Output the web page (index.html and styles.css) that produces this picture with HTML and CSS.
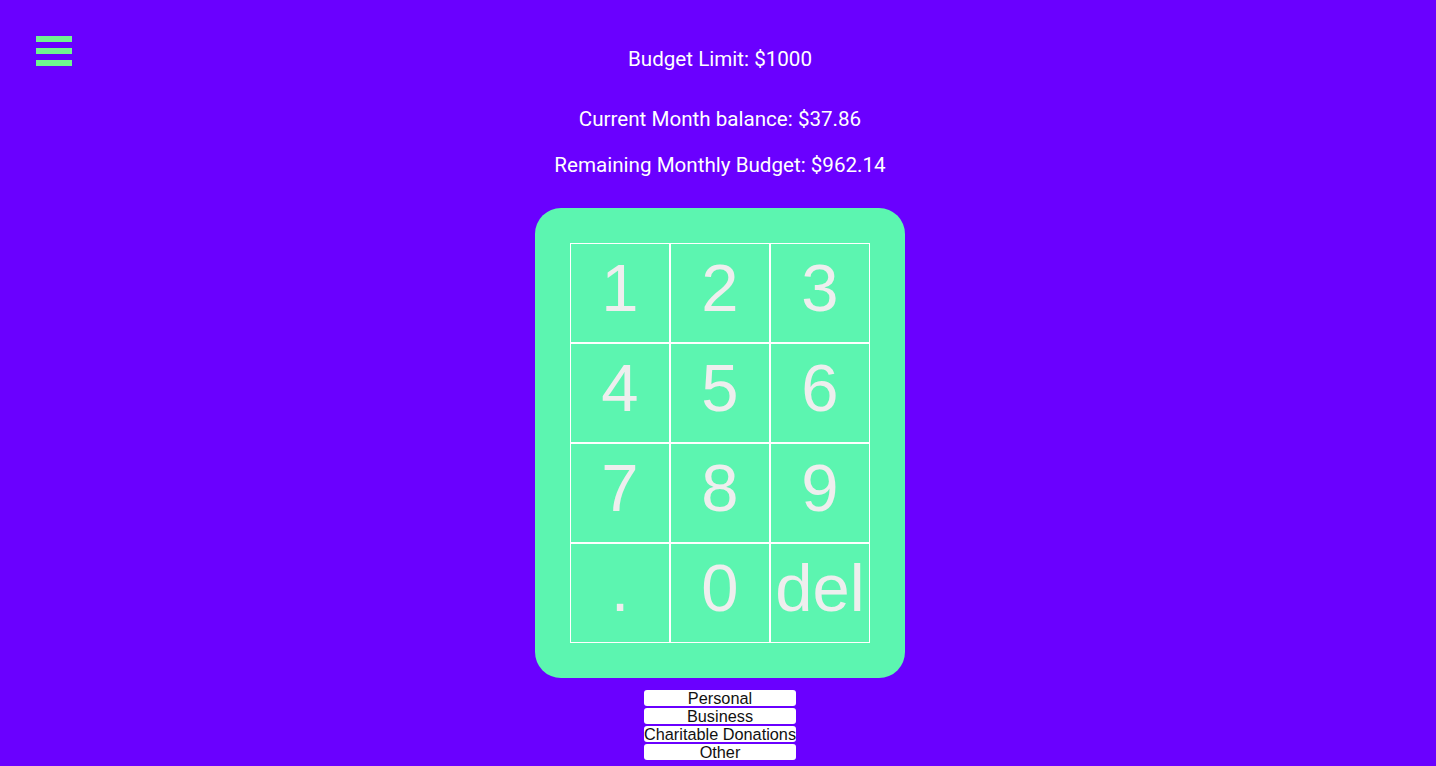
FILE: index.html
```html
<!DOCTYPE html>
<html>
<head>
<meta charset="utf-8">
<link rel="stylesheet" href="styles.css">
</head>
<body>
<div class="page">
  <header class="topbar">
    <button class="menu" aria-label="menu">
      <span></span><span></span><span></span>
    </button>
    <p class="stat first">Budget Limit: $1000</p>
    <div></div>
  </header>
  <p class="stat second">Current Month balance: $37.86</p>
  <p class="stat third">Remaining Monthly Budget: $962.14</p>
  <div class="pad">
    <div class="keys">
      <button class="key">1</button>
      <button class="key">2</button>
      <button class="key">3</button>
      <button class="key">4</button>
      <button class="key">5</button>
      <button class="key">6</button>
      <button class="key">7</button>
      <button class="key">8</button>
      <button class="key">9</button>
      <button class="key">.</button>
      <button class="key">0</button>
      <button class="key">del</button>
    </div>
  </div>
  <div class="cats">
    <button class="cat">Personal</button>
    <button class="cat">Business</button>
    <button class="cat">Charitable Donations</button>
    <button class="cat">Other</button>
  </div>
</div>
</body>
</html>
```
FILE: styles.css
```css
html, body {
  margin: 0;
  padding: 0;
  background: #6a00ff;
  height: 100%;
}
body {
  font-family: Roboto, "Liberation Sans", sans-serif;
  color: #ffffff;
  overflow: hidden;
}
.page {
  display: flex;
  flex-direction: column;
  align-items: center;
  padding-top: 35px;
  padding-left: 4px;
}
.topbar {
  width: 100%;
  display: grid;
  grid-template-columns: 1fr auto 1fr;
  align-items: start;
}
.menu {
  justify-self: start;
  margin-left: 32px;
  margin-top: 1px;
  padding: 0;
  border: 0;
  background: none;
  width: 36px;
  display: flex;
  flex-direction: column;
  gap: 6px;
  cursor: pointer;
}
.menu span {
  display: block;
  width: 36px;
  height: 6px;
  background: #6ff590;
}
.stat {
  margin: 0;
  font-size: 20.6px;
  line-height: 24px;
  text-align: center;
}
.stat.first {
  margin-top: 12px;
}
.stat.second {
  margin-top: 36px;
}
.stat.third {
  margin-top: 22px;
}
.pad {
  margin-top: 31px;
  background: #5cf5b0;
  border-radius: 26px;
  padding: 35px;
}
.keys {
  display: grid;
  grid-template-columns: repeat(3, 100px);
  grid-auto-rows: 100px;
}
.key {
  box-sizing: border-box;
  border: 1px solid #ffffff;
  background: transparent;
  color: #eeeeee;
  font-family: "Liberation Sans", Arial, sans-serif;
  font-size: 67px;
  padding: 0 0 12px 0;
  margin: 0;
  display: flex;
  align-items: center;
  justify-content: center;
  overflow: visible;
  white-space: nowrap;
}
.cats {
  margin-top: 12px;
  display: inline-flex;
  flex-direction: column;
  gap: 2px;
}
.cat {
  font-family: "Liberation Sans", Arial, sans-serif;
  font-size: 16.3px;
  line-height: 16px;
  height: 16px;
  padding: 0;
  border: 0;
  border-radius: 3px;
  background: #ffffff;
  color: #111111;
  white-space: nowrap;
}
```
